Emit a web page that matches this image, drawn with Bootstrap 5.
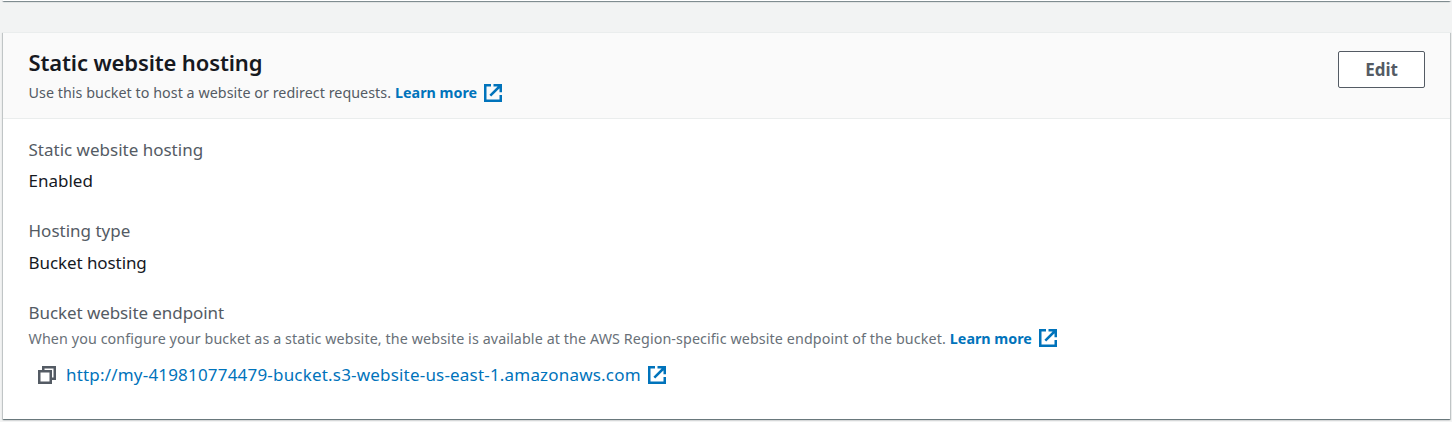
<!DOCTYPE html>
<html lang="en">
<head>
<meta charset="utf-8">
<title>Static website hosting</title>
<link href="https://cdn.jsdelivr.net/npm/bootstrap@5.3.0/dist/css/bootstrap.min.css" rel="stylesheet">
<style>
body{background:#f2f3f3;color:#16191f;font-family:"Noto Sans","Open Sans",sans-serif;font-size:17px;line-height:28px;height:422px;overflow:hidden}
.panel{background:#fff;border:0;border-radius:0;margin:0 2px 0 3px;box-shadow:0 1px 1px 0 rgba(0,28,36,.4),1px 1px 1px 0 rgba(0,28,36,.15),-1px 1px 1px 0 rgba(0,28,36,.15)}
.panel-end{height:1px}
.panel-main{margin-top:31px;height:387px;color:inherit}
.panel-head{height:87px;background:#fafafa;border-bottom:1px solid #eaeded;border-top:1px solid #eaeded;padding:14px 25px 0 25.5px;border-radius:0!important}
.panel-title{font-size:22px;font-weight:600;line-height:30px;letter-spacing:-.13px;margin:0}
.hint{font-size:14.3px;line-height:22px;color:#687078;white-space:nowrap;letter-spacing:.1px}
.panel-head .hint{margin-top:5px;color:#545b64;letter-spacing:.04px}
.fields .hint span{padding-top:1px}
.fields .hint{height:22px}
.field-name{color:#545b64}
.tight{letter-spacing:-.08px}
.gap-value{margin-top:3px}
.gap-value-lg{margin-top:4px}
.gap-field{margin-top:22px}
a{color:#0073bb;text-decoration:none}
.hint a{font-weight:700;letter-spacing:0}
.glyph{width:18px;height:18px;flex:none}
.after-text{margin-left:7px}
.btn-edit{width:87px;height:37px;margin-top:4px;border:1px solid #545b64;border-radius:2px;background:#fff;color:#545b64;font-weight:700;font-size:17px;line-height:34px;padding:0}
.fields{padding:17px 25px 0 25.5px}
.endpoint{margin-top:12px;padding-left:9.5px;letter-spacing:.19px}
.endpoint .url{margin-left:10px}
</style>
</head>
<body>
<svg class="d-none">
  <symbol id="external" viewBox="0 0 18 18"><path d="M7 1.250H1.250v15.500h15.500V11M9.500 1.250h7.250V8.200M16.500 1.500 6.300 11.700" fill="none" stroke="#0073bb" stroke-width="2.5"/></symbol>
  <symbol id="copy" viewBox="0 0 18 18"><path d="M1.250 5.250h11.500v11.500H1.250zM5.250 5.250v-4h11.500v11.500h-4" fill="none" stroke="#545b64" stroke-width="2.5"/></symbol>
</svg>
<div class="card panel panel-end"></div>
<section class="card panel panel-main">
  <header class="card-header panel-head d-flex justify-content-between align-items-start">
    <div>
      <h2 class="panel-title">Static website hosting</h2>
      <div class="hint d-flex align-items-center"><span>Use this bucket to host a website or redirect requests.</span><a href="#" class="ms-1 d-flex align-items-center"><span>Learn more</span><svg class="glyph after-text"><use href="#external"/></svg></a></div>
    </div>
    <button type="button" class="btn btn-edit">Edit</button>
  </header>
  <div class="card-body fields">
    <div class="field-name">Static website hosting</div>
    <div class="gap-value">Enabled</div>
    <div class="field-name gap-field">Hosting type</div>
    <div class="gap-value-lg tight">Bucket hosting</div>
    <div class="field-name gap-field tight">Bucket website endpoint</div>
    <div class="hint d-flex align-items-center"><span>When you configure your bucket as a static website, the website is available at the AWS Region-specific website endpoint of the bucket.</span><a href="#" class="ms-1 d-flex align-items-center"><span>Learn more</span><svg class="glyph after-text"><use href="#external"/></svg></a></div>
    <div class="endpoint d-flex align-items-center"><svg class="glyph"><use href="#copy"/></svg><a href="#" class="url d-flex align-items-center"><span>http://my-419810774479-bucket.s3-website-us-east-1.amazonaws.com</span><svg class="glyph after-text"><use href="#external"/></svg></a></div>
  </div>
</section>
<script src="https://cdn.jsdelivr.net/npm/bootstrap@5.3.0/dist/js/bootstrap.bundle.min.js"></script>
</body>
</html>
